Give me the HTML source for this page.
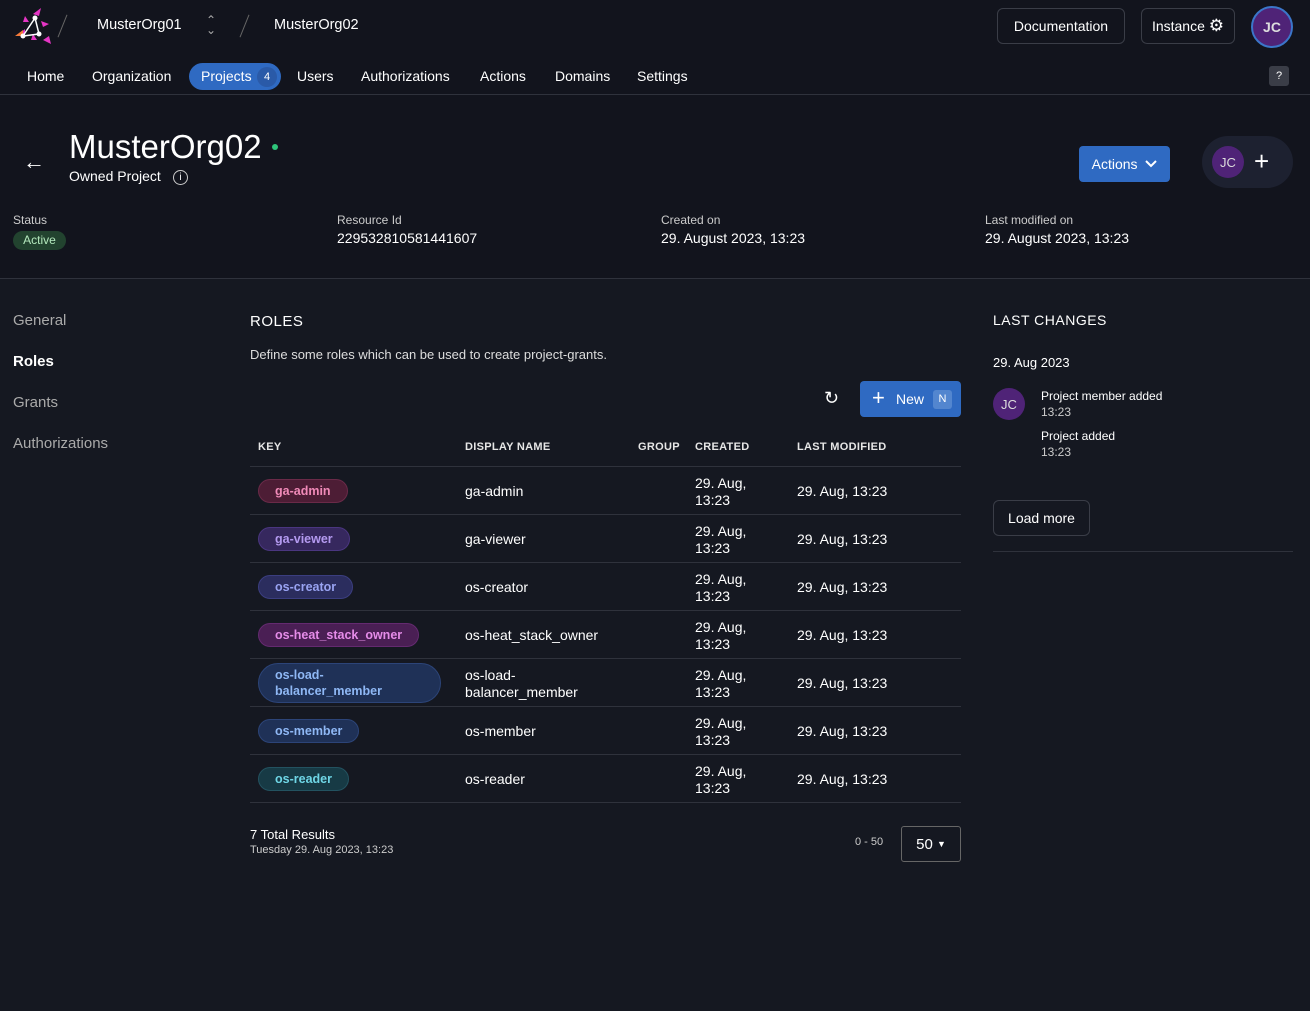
<!DOCTYPE html>
<html><head><meta charset="utf-8"><style>
*{box-sizing:border-box;margin:0;padding:0}
body{width:1310px;height:1011px;background:#151821;font-family:"Liberation Sans",sans-serif;color:#fff;position:relative;overflow:hidden;font-size:14px}
.a{position:absolute;white-space:nowrap}
.top{position:absolute;left:0;top:0;width:1310px;height:278px;background:#12141d}
.hl{position:absolute;left:0;width:1310px;height:1px;background:#2f323c}
.btn{position:absolute;border:1px solid #3a3d47;border-radius:6px;font-size:14px;display:flex;align-items:center;justify-content:center}
.nav span{position:absolute;top:68px;font-size:14px}
.chip{position:absolute;left:258px;border-radius:14px;font-size:12.5px;font-weight:bold;padding:0 16px;display:flex;align-items:center}
.row{position:absolute;left:250px;width:711px;height:48px;border-bottom:1px solid #2f323c;font-size:14px}
.row .c{position:absolute;line-height:17px}
.th{position:absolute;top:441px;font-size:11px;font-weight:bold;letter-spacing:.3px;color:#e6e6e6}
</style></head><body>
<div class="top"></div>
<svg class="a" style="left:13px;top:6px" width="42" height="40" viewBox="0 0 42 40">
<path d="M28 2l-8 6 6 2z M36 18l-8-3 2 6z M6 28l6-5v7z M30 34l8 4-2-8z M12 10l4 6-6 0z M20 28l4 6 -6 0z" fill="#e535c4"/>
<path d="M2 30l8-6v6z" fill="#f57a3a"/>
<path d="M22 12l-12 18 L26 28z M22 12l4 16" stroke="#fff" stroke-width="1.5" fill="none"/>
<circle cx="22" cy="12" r="2.5" fill="#fff"/><circle cx="10" cy="30" r="2.5" fill="#fff"/><circle cx="26" cy="28" r="2.5" fill="#fff"/>
</svg>
<div class="a" style="left:62px;top:14px;width:1px;height:24px;background:#666;transform:rotate(22deg)"></div>
<div class="a" style="left:97px;top:17px;font-size:14.5px">MusterOrg01</div>
<div class="a" style="left:206px;top:15px;font-size:12px;color:#aaa;line-height:10px">⌃<br>⌄</div>
<div class="a" style="left:244px;top:14px;width:1px;height:24px;background:#666;transform:rotate(22deg)"></div>
<div class="a" style="left:274px;top:17px;font-size:14.5px">MusterOrg02</div>
<div class="btn" style="left:997px;top:8px;width:128px;height:36px">Documentation</div>
<div class="btn" style="left:1141px;top:8px;width:94px;height:36px">Instance&nbsp;<span style="font-size:17px">⚙</span></div>
<div class="a" style="left:1251px;top:6px;width:42px;height:42px;border-radius:50%;background:#4f2377;border:2px solid #3b76c9;display:flex;align-items:center;justify-content:center;font-size:14px;color:#ddd;font-weight:bold">JC</div>
<div class="nav">
<span style="left:27px">Home</span><span style="left:92px">Organization</span>
<div class="a" style="left:189px;top:63px;width:92px;height:27px;background:#2f6ac2;border-radius:14px"></div>
<span style="left:201px">Projects</span>
<div class="a" style="left:257px;top:67px;width:20px;height:20px;border-radius:50%;background:#2a5aa8;font-size:11px;display:flex;align-items:center;justify-content:center">4</div>
<span style="left:297px">Users</span><span style="left:361px">Authorizations</span><span style="left:480px">Actions</span><span style="left:555px">Domains</span><span style="left:637px">Settings</span>
</div>
<div class="a" style="left:1269px;top:66px;width:20px;height:20px;background:#3a3d47;border-radius:3px;font-size:11px;display:flex;align-items:center;justify-content:center">?</div>
<div class="hl" style="top:94px"></div>
<div class="a" style="left:23px;top:149px;font-size:22px">←</div>
<div class="a" style="left:69px;top:128px;font-size:33px">MusterOrg02</div>
<div class="a" style="left:272px;top:144px;width:6px;height:6px;border-radius:50%;background:#2ec57a"></div>
<div class="a" style="left:69px;top:168px;font-size:14px">Owned Project</div>
<div class="a" style="left:173px;top:170px;width:15px;height:15px;border:1px solid #ccc;border-radius:50%;font-size:10px;text-align:center;line-height:13px">i</div>
<div class="a" style="left:1079px;top:146px;width:91px;height:36px;background:#2f6ac2;border-radius:4px;font-size:14px;display:flex;align-items:center;justify-content:center">Actions&nbsp;&nbsp;<svg width="12" height="8"><path d="M1 1l5 5 5-5" stroke="#fff" stroke-width="2" fill="none"/></svg></div>
<div class="a" style="left:1202px;top:136px;width:91px;height:52px;background:#1d2130;border-radius:26px"></div>
<div class="a" style="left:1212px;top:146px;width:32px;height:32px;border-radius:50%;background:#4f2377;font-size:13px;color:#ddd;display:flex;align-items:center;justify-content:center">JC</div>
<div class="a" style="left:1254px;top:148px;font-size:26px;line-height:26px">+</div>
<div class="a" style="left:13px;top:213px;font-size:12px;color:#ccc">Status</div>
<div class="a" style="left:13px;top:231px;width:53px;height:19px;background:#22432f;border-radius:10px;font-size:12px;color:#b4e9bd;text-align:center;line-height:19px">Active</div>
<div class="a" style="left:337px;top:213px;font-size:12px;color:#ccc">Resource Id</div>
<div class="a" style="left:337px;top:230px;font-size:14px">229532810581441607</div>
<div class="a" style="left:661px;top:213px;font-size:12px;color:#ccc">Created on</div>
<div class="a" style="left:661px;top:230px;font-size:14px">29. August 2023, 13:23</div>
<div class="a" style="left:985px;top:213px;font-size:12px;color:#ccc">Last modified on</div>
<div class="a" style="left:985px;top:230px;font-size:14px">29. August 2023, 13:23</div>
<div class="hl" style="top:278px"></div>
<div class="a" style="left:13px;top:312px;font-size:15px;color:#aaa">General</div>
<div class="a" style="left:13px;top:353px;font-size:15px;font-weight:bold">Roles</div>
<div class="a" style="left:13px;top:394px;font-size:15px;color:#aaa">Grants</div>
<div class="a" style="left:13px;top:435px;font-size:15px;color:#aaa">Authorizations</div>
<div class="a" style="left:250px;top:313px;font-size:15px;letter-spacing:.5px">ROLES</div>
<div class="a" style="left:250px;top:347px;font-size:13px;color:#ddd">Define some roles which can be used to create project-grants.</div>
<div class="a" style="left:824px;top:388px;font-size:18px">↻</div>
<div class="a" style="left:860px;top:381px;width:101px;height:36px;background:#2f6ac2;border-radius:4px"></div>
<div class="a" style="left:872px;top:387px;font-size:22px;line-height:22px">+</div>
<div class="a" style="left:896px;top:391px;font-size:14px">New</div>
<div class="a" style="left:933px;top:390px;width:19px;height:19px;background:#5386cf;border-radius:3px;font-size:11px;text-align:center;line-height:19px">N</div>
<div class="th" style="left:258px">KEY</div><div class="th" style="left:465px">DISPLAY NAME</div><div class="th" style="left:638px">GROUP</div><div class="th" style="left:695px">CREATED</div><div class="th" style="left:797px">LAST MODIFIED</div>
<div class="hl" style="top:466px;left:250px;width:711px"></div>
<div class="row" style="top:467px"><div class="c" style="left:215px;top:16px">ga-admin</div><div class="c" style="left:445px;top:8px">29. Aug,<br>13:23</div><div class="c" style="left:547px;top:16px">29. Aug, 13:23</div></div>
<div class="chip" style="top:479px;height:24px;background:#4d1d35;border:1px solid #6a2a48;color:#f08ab8">ga-admin</div>
<div class="row" style="top:515px"><div class="c" style="left:215px;top:16px">ga-viewer</div><div class="c" style="left:445px;top:8px">29. Aug,<br>13:23</div><div class="c" style="left:547px;top:16px">29. Aug, 13:23</div></div>
<div class="chip" style="top:527px;height:24px;background:#36285e;border:1px solid #4a3680;color:#b49af0">ga-viewer</div>
<div class="row" style="top:563px"><div class="c" style="left:215px;top:16px">os-creator</div><div class="c" style="left:445px;top:8px">29. Aug,<br>13:23</div><div class="c" style="left:547px;top:16px">29. Aug, 13:23</div></div>
<div class="chip" style="top:575px;height:24px;background:#2b2d5e;border:1px solid #3b3e80;color:#99a3f2">os-creator</div>
<div class="row" style="top:611px"><div class="c" style="left:215px;top:16px">os-heat_stack_owner</div><div class="c" style="left:445px;top:8px">29. Aug,<br>13:23</div><div class="c" style="left:547px;top:16px">29. Aug, 13:23</div></div>
<div class="chip" style="top:623px;height:24px;background:#4a1f54;border:1px solid #642a70;color:#e58ce8">os-heat_stack_owner</div>
<div class="row" style="top:659px"><div class="c" style="left:215px;top:8px">os-load-<br>balancer_member</div><div class="c" style="left:445px;top:8px">29. Aug,<br>13:23</div><div class="c" style="left:547px;top:16px">29. Aug, 13:23</div></div>
<div class="chip" style="top:663px;height:40px;width:183px;border-radius:20px;background:#1f3157;border:1px solid #2c4478;color:#8fb8f5;line-height:16px;white-space:normal">os-load-<br>balancer_member</div>
<div class="row" style="top:707px"><div class="c" style="left:215px;top:16px">os-member</div><div class="c" style="left:445px;top:8px">29. Aug,<br>13:23</div><div class="c" style="left:547px;top:16px">29. Aug, 13:23</div></div>
<div class="chip" style="top:719px;height:24px;background:#1f3157;border:1px solid #2c4478;color:#8fb8f5">os-member</div>
<div class="row" style="top:755px"><div class="c" style="left:215px;top:16px">os-reader</div><div class="c" style="left:445px;top:8px">29. Aug,<br>13:23</div><div class="c" style="left:547px;top:16px">29. Aug, 13:23</div></div>
<div class="chip" style="top:767px;height:24px;background:#173a45;border:1px solid #235260;color:#6fd6e6">os-reader</div>
<div class="a" style="left:250px;top:827px;font-size:13px">7 Total Results</div>
<div class="a" style="left:250px;top:844px;font-size:11px;color:#ccc">Tuesday 29. Aug 2023, 13:23</div>
<div class="a" style="left:855px;top:836px;font-size:11px;color:#ccc">0 - 50</div>
<div class="btn" style="left:901px;top:826px;width:60px;height:36px;border-color:#666;border-radius:3px;font-size:15px">50&nbsp;<span style="font-size:9px">▼</span></div>
<div class="a" style="left:993px;top:312px;font-size:14px;letter-spacing:.5px">LAST CHANGES</div>
<div class="a" style="left:993px;top:355px;font-size:13px">29. Aug 2023</div>
<div class="a" style="left:993px;top:388px;width:32px;height:32px;border-radius:50%;background:#4f2377;font-size:13px;color:#ddd;display:flex;align-items:center;justify-content:center">JC</div>
<div class="a" style="left:1041px;top:389px;font-size:12px">Project member added</div>
<div class="a" style="left:1041px;top:405px;font-size:12px;color:#ccc">13:23</div>
<div class="a" style="left:1041px;top:429px;font-size:12px">Project added</div>
<div class="a" style="left:1041px;top:445px;font-size:12px;color:#ccc">13:23</div>
<div class="btn" style="left:993px;top:500px;width:97px;height:36px">Load more</div>
<div class="hl" style="top:551px;left:993px;width:300px"></div>
</body></html>
